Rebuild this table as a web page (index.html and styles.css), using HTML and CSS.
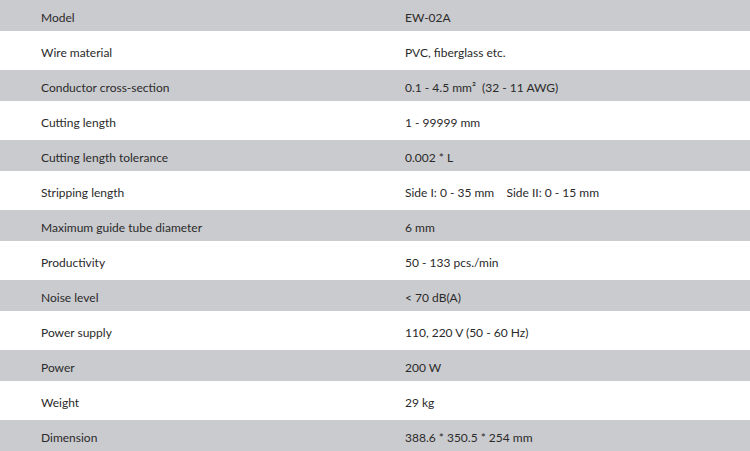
FILE: index.html
```html
<!DOCTYPE html>
<html>
<head>
<meta charset="utf-8">
<link rel="stylesheet" href="styles.css">
</head>
<body>
<div class="spec">
  <div class="row alt"><span class="k">Model</span><span class="v">EW-02A</span></div>
  <div class="row"><span class="k">Wire material</span><span class="v">PVC, fiberglass etc.</span></div>
  <div class="row alt"><span class="k">Conductor cross-section</span><span class="v">0.1 - 4.5 mm²  (32 - 11 AWG)</span></div>
  <div class="row"><span class="k">Cutting length</span><span class="v">1 - 99999 mm</span></div>
  <div class="row alt"><span class="k">Cutting length tolerance</span><span class="v">0.002 * L</span></div>
  <div class="row"><span class="k">Stripping length</span><span class="v">Side I: 0 - 35 mm    Side II: 0 - 15 mm</span></div>
  <div class="row alt"><span class="k">Maximum guide tube diameter</span><span class="v">6 mm</span></div>
  <div class="row"><span class="k">Productivity</span><span class="v">50 - 133 pcs./min</span></div>
  <div class="row alt"><span class="k">Noise level</span><span class="v">&lt; 70 dB(A)</span></div>
  <div class="row"><span class="k">Power supply</span><span class="v">110, 220 V (50 - 60 Hz)</span></div>
  <div class="row alt"><span class="k">Power</span><span class="v">200 W</span></div>
  <div class="row"><span class="k">Weight</span><span class="v">29 kg</span></div>
  <div class="row alt"><span class="k">Dimension</span><span class="v">388.6 * 350.5 * 254 mm</span></div>
</div>
</body>
</html>
```
FILE: styles.css
```css
html, body {
  margin: 0;
  padding: 0;
  background: #ffffff;
}
.spec {
  display: flex;
  flex-direction: column;
  font-family: "Lato", "Open Sans", sans-serif;
  font-size: 12px;
  color: #2a2a2a;
}
.row {
  display: grid;
  grid-template-columns: 364px 1fr;
  align-items: center;
  height: 35px;
  box-sizing: border-box;
  padding-left: 41px;
  padding-top: 3px;
  border-top: 2px solid #ffffff;
  border-bottom: 2px solid #ffffff;
  background: #ffffff;
}
.row:first-child {
  height: 33px;
  border-top: 0;
}
.row.alt {
  background: #cacbcf;
}
.v {
  white-space: pre;
}
```
